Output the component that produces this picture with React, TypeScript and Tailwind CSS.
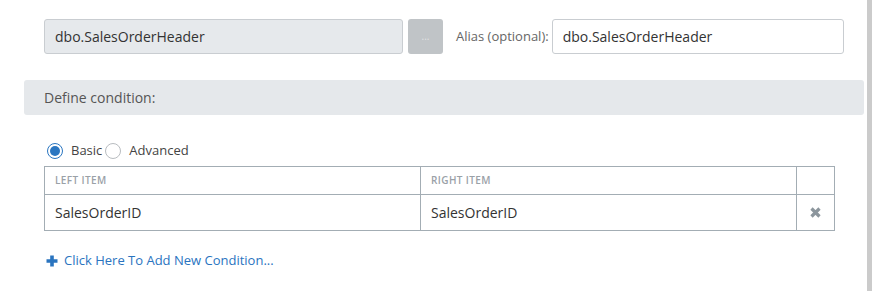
import React from "react";

export default function App() {
  return (
    <div
      className="w-[896px] h-[291px] bg-white flex overflow-hidden"
      style={{ fontFamily: '"Open Sans", "Liberation Sans", sans-serif' }}
    >
      <div className="w-[867px] pl-[24px] pt-[19px]">
        {/* top row */}
        <div className="flex items-center pl-[20px] h-[35px]">
          <div className="w-[359px] h-[35px] bg-[#e6e9ec] border border-[#c9cdd1] rounded-[3px] flex items-center pl-[10px] text-[14px] text-[#333]">
            dbo.SalesOrderHeader
          </div>
          <div className="ml-[5px] w-[35px] h-[35px] bg-[#c0c4c7] rounded-[3px] flex items-center justify-center text-[10px] text-[#e0e2e4] pb-[1px]">
            ...
          </div>
          <div className="ml-[13px] text-[13px] text-[#666]">Alias (optional):</div>
          <div className="ml-[3px] w-[292px] h-[35px] bg-white border border-[#c9cdd1] rounded-[3px] flex items-center pl-[10px] text-[14px] text-[#333]">
            dbo.SalesOrderHeader
          </div>
        </div>

        {/* define condition */}
        <div className="mt-[26px] w-[840px] h-[35px] bg-[#e5e8eb] rounded-[3px] flex items-center pl-[20px] text-[14px] text-[#555]">
          Define condition:
        </div>

        {/* radio row */}
        <div className="pl-[20px] mt-[27px] flex items-center h-[18px] text-[13px] text-[#444]">
          <span className="w-[16px] h-[16px] ml-[3px] rounded-full border border-[#2a76c1] bg-white flex items-center justify-center">
            <span className="w-[10px] h-[10px] rounded-full bg-[#2a76c1]" />
          </span>
          <span className="ml-[8px]">Basic</span>
          <span className="w-[16px] h-[16px] ml-[3px] rounded-full border border-[#b8bcc0] bg-white" />
          <span className="ml-[8px]">Advanced</span>
        </div>

        {/* table */}
        <div className="ml-[20px] mt-[6px] w-[791px] border border-[#a3adb4]">
          <div className="flex h-[28px] border-b border-[#a3adb4] text-[10px] font-semibold text-[#9aa1a7] tracking-[0.4px]">
            <div className="w-[376px] border-r border-[#a3adb4] flex items-center pl-[10px]">LEFT ITEM</div>
            <div className="w-[376px] border-r border-[#a3adb4] flex items-center pl-[10px]">RIGHT ITEM</div>
            <div className="flex-1" />
          </div>
          <div className="flex h-[35px] text-[14px] text-[#333]">
            <div className="w-[376px] border-r border-[#a3adb4] flex items-center pl-[10px]">SalesOrderID</div>
            <div className="w-[376px] border-r border-[#a3adb4] flex items-center pl-[10px]">SalesOrderID</div>
            <div className="flex-1 flex items-center justify-center">
              <svg width="11" height="11" viewBox="0 0 11 11">
                <path d="M1.5 1.5 L9.5 9.5 M9.5 1.5 L1.5 9.5" stroke="#8c969d" strokeWidth="3.2" strokeLinecap="butt" />
              </svg>
            </div>
          </div>
        </div>

        {/* add link */}
        <div className="ml-[22px] mt-[20px] flex items-center text-[13px] text-[#2a74bf]">
          <svg width="12" height="12" viewBox="0 0 12 12">
            <path d="M6 0.5 V11.5 M0.5 6 H11.5" stroke="#2a74bf" strokeWidth="3.6" />
          </svg>
          <span className="ml-[6px]">Click Here To Add New Condition...</span>
        </div>
      </div>
      <div className="w-[5px] h-full bg-[#cbcbcb]" />
    </div>
  );
}
